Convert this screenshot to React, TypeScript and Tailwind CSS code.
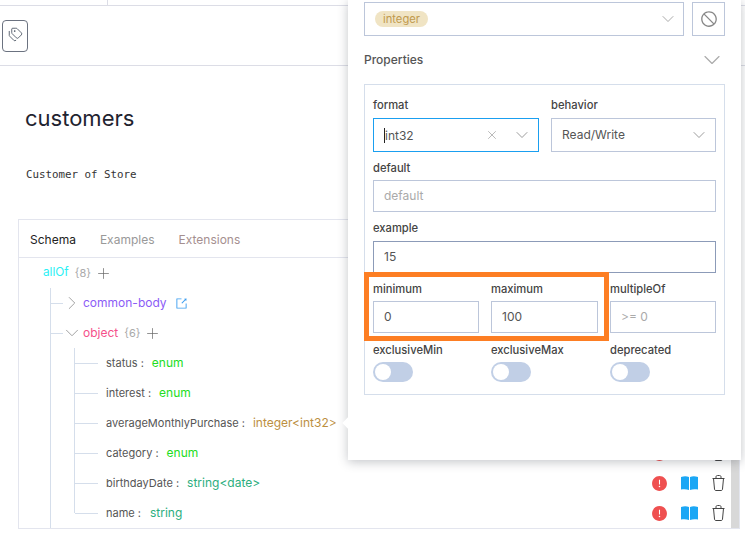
import { ChevronDown, ChevronRight, Plus, Tags, X } from "lucide-react";
import { AiFillExclamationCircle, AiOutlineExport, AiOutlineStop } from "react-icons/ai";

const fields = [
  { name: "status", type: "enum", color: "text-[#22dd22]", gap: "ml-2" },
  { name: "interest", type: "enum", color: "text-[#22dd22]", gap: "ml-2" },
  { name: "averageMonthlyPurchase", type: "integer<int32>", color: "text-[#bc8f3f]", gap: "ml-2" },
  { name: "category", type: "enum", color: "text-[#22dd22]", gap: "ml-2" },
  { name: "birthdayDate", type: "string<date>", color: "text-[#2cae7e]", gap: "ml-2" },
  { name: "name", type: "string", color: "text-[#2cae7e]", gap: "ml-[9px]" },
];

const Field = ({
  label,
  children,
  className,
  tall,
}: {
  label: string;
  children: React.ReactNode;
  className?: string;
  tall?: boolean;
}) => (
  <div className={className}>
    <div className={`${tall ? "h-[22px]" : "h-[21px]"} text-[11.2px] leading-[18px] font-medium text-[#444]`}>{label}</div>
    {children}
  </div>
);

const TextBox = ({ value, placeholder, dark }: { value?: string; placeholder?: string; dark?: boolean }) => (
  <div
    className={`flex h-8 items-center border px-[10px] text-xs ${dark ? "border-[#8c9bb8]" : "border-[#bcc6da]"} ${value ? "text-[#555]" : "text-[#aaa]"}`}
  >
    {value || placeholder}
  </div>
);

const Toggle = () => (
  <div className="flex h-5 w-10 items-center rounded-full bg-[#c1cfe6] pl-[2px]">
    <div className="h-4 w-4 rounded-full bg-white" />
  </div>
);

const BookIcon = () => (
  <svg width="17" height="14" viewBox="0 0 17 14" className="text-[#1ba7f5]" fill="currentColor">
    <path d="M0 1C3 0 5.500 0 8 1V14C5.500 13 3 13 0 13.500Z" />
    <path d="M17 1C14 0 11.500 0 9 1V14C11.500 13 14 13 17 13.500Z" />
  </svg>
);

const TrashIcon = () => (
  <svg width="13" height="16" viewBox="0 0 13 16" fill="none" stroke="#444" strokeWidth="1">
    <path d="M0.500 3.500H12.500" />
    <path d="M4 3.500V2C4 1 4.500 0.500 5.500 0.500H7.500C8.500 0.500 9 1 9 2V3.500" />
    <path d="M1.500 3.500L2.500 14C2.600 15 3 15.500 4 15.500H9C10 15.500 10.400 15 10.500 14L11.500 3.500" />
  </svg>
);

const Popover = () => (
  <div className="absolute top-0 left-[348px] h-[460px] w-[393px] bg-white px-4 shadow-[0_2px_10px_rgba(40,45,60,0.28)]">
    <div className="absolute top-[419px] left-[-4px] h-2 w-2 rotate-45 bg-white" />

    <div className="mt-[2px] flex gap-2">
      <div className="flex h-[34px] w-[320px] items-center justify-between border border-[#bcc6da] pr-[5px] pl-[10px]">
        <span className="rounded-full bg-[#f0e4c4] px-2 text-[11.2px] leading-4 text-[#c09a4e]">integer</span>
        <ChevronDown size={20} strokeWidth={1} className="text-[#999]" />
      </div>
      <div className="flex h-[34px] w-[33px] items-center justify-center border border-[#bcc6da]">
        <AiOutlineStop size={18} className="text-[#888]" />
      </div>
    </div>

    <div className="mt-[14px] flex h-[20px] items-center justify-between text-xs font-medium text-[#555]">
      <span>Properties</span>
      <ChevronDown size={28} strokeWidth={1} className="-mr-px text-[#aaa]" />
    </div>

    <div className="mt-[14px] h-[311px] w-[361px] border border-[#d5deeb] px-2 pt-[11px]">
      <div className="flex gap-3">
        <Field label="format" className="w-[166px]" tall>
          <div className="flex h-[34px] items-center justify-between border border-[#1a9ff0] pr-[6px] pl-[10px] text-xs text-[#555]">
            <span className="border-l border-[#222] leading-[15px]">int32</span>
            <span className="flex items-center gap-[13px] text-[#888]">
              <X size={14} strokeWidth={1} />
              <ChevronDown size={20} strokeWidth={1} />
            </span>
          </div>
        </Field>
        <Field label="behavior" className="w-[165px]" tall>
          <div className="flex h-[34px] items-center justify-between border border-[#bcc6da] pr-[6px] pl-[10px] text-xs text-[#555]">
            <span>Read/Write</span>
            <ChevronDown size={20} strokeWidth={1} className="text-[#888]" />
          </div>
        </Field>
      </div>
      <Field label="default" className="mt-[7px]">
        <TextBox placeholder="default" />
      </Field>
      <Field label="example" className="mt-[7px]" tall>
        <TextBox value="15" dark />
      </Field>
      <div className="mt-[7px] grid grid-cols-[106px_107px_106px] gap-x-3">
        <Field label="minimum"><TextBox value="0" /></Field>
        <Field label="maximum"><TextBox value="100" /></Field>
        <Field label="multipleOf"><TextBox placeholder=">= 0" /></Field>
      </div>
      <div className="mt-2 grid grid-cols-[106px_107px_106px] gap-x-3">
        <Field label="exclusiveMin"><Toggle /></Field>
        <Field label="exclusiveMax"><Toggle /></Field>
        <Field label="deprecated"><Toggle /></Field>
      </div>
    </div>

    <div className="absolute top-[272px] left-4 h-[69px] w-[245px] border-[5px] border-[#fd7e23]" />
  </div>
);

export default function App() {
  return (
    <div className="relative h-[533px] w-[745px] overflow-hidden bg-white font-['Inter',sans-serif]">
      <div className="h-[6px] border-b border-[#dcdde6]">
        <div className="h-full w-[108px] border-r border-[#dcdde6]" />
      </div>

      <div className="flex h-[60px] items-center border-b border-[#dcdde6] pl-[2px]">
        <div className="flex h-8 w-[26px] items-center justify-center rounded-sm border border-[#6b7280]">
          <Tags size={15} strokeWidth={1.4} className="-mt-[2px] text-[#4b5563]" />
        </div>
      </div>

      <h1 className="mt-[38px] ml-[25px] text-[22px] leading-[28px] text-[#1f2430]">customers</h1>
      <p className="mt-[35px] ml-[26px] font-['DejaVu_Sans_Mono',monospace] text-[10.8px] leading-4 text-[#333]">
        Customer of Store
      </p>

      <div className="mt-[36px] ml-[18px] h-[310px] w-[722px] border border-[#e3e5ee]">
        <div className="flex h-[38px] items-center gap-6 border-b border-[#e3e5ee] pt-[3px] pl-[11px] text-xs">
          <span className="text-[#222]">Schema</span>
          <span className="text-[#999]">Examples</span>
          <span className="text-[#a58f8f]">Extensions</span>
        </div>

        <div className="flex h-[270px]">
          <div className="flex-1 pl-6 text-xs">
            <div className="flex h-[30px] items-center">
              <span className="text-[11.8px] text-[#2af0f5]">allOf</span>
              <span className="ml-[6px] text-[11px] text-[#aaa]">{"{8}"}</span>
              <Plus size={17} strokeWidth={1} className="ml-1 text-[#666]" />
            </div>

            <div className="ml-[7px] h-[240px] border-l border-[#d5deeb]">
              <div className="flex h-[30px] items-center">
                <span className="h-px w-3 bg-[#d5deeb]" />
                <ChevronRight size={22} strokeWidth={1} className="-ml-[2px] text-[#999]" />
                <span className="text-xs text-[#8b5cf6]">common-body</span>
                <AiOutlineExport size={13} className="ml-2 text-[#3b9df0]" />
              </div>
              <div className="flex h-[30px] items-center">
                <span className="h-px w-3 bg-[#d5deeb]" />
                <ChevronDown size={22} strokeWidth={1} className="-ml-[2px] text-[#999]" />
                <span className="text-xs text-[#f5508a]">object</span>
                <span className="ml-[6px] text-[11px] text-[#aaa]">{"{6}"}</span>
                <Plus size={17} strokeWidth={1} className="ml-1 text-[#666]" />
              </div>

              <div className="ml-[23px]">
                {fields.map((f, i) => (
                  <div key={f.name} className="flex h-[30px] items-center pr-[6px]">
                    <span className={`w-px bg-[#d5deeb] ${i === fields.length - 1 ? "h-[15px] self-start" : "self-stretch"}`} />
                    <span className="h-px w-[23px] bg-[#d5deeb]" />
                    <span className="ml-2 text-[11px] text-[#555]">{f.name} :</span>
                    <span className={`text-xs ${f.gap} ${f.color}`}>{f.type}</span>
                    <div className="ml-auto flex items-center">
                      <AiFillExclamationCircle size={17} className="text-[#ef5050]" />
                      <span className="ml-[13px]"><BookIcon /></span>
                      <span className="ml-[14px]"><TrashIcon /></span>
                    </div>
                  </div>
                ))}
              </div>
            </div>
          </div>
          <div className="w-2 bg-[#d8d8d8]" />
        </div>
      </div>

      <Popover />
    </div>
  );
}
